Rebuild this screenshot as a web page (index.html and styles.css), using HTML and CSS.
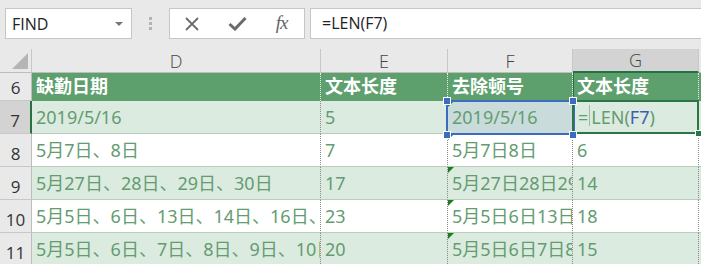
FILE: index.html
```html
<!DOCTYPE html>
<html lang="zh-CN">
<head>
    <meta charset="UTF-8">
    <title>FIND - LEN</title>
    <link rel="stylesheet" href="styles.css">
</head>
<body>
    <div class="toolbar">
        <div class="namebox">
            <span>FIND</span>
            <span class="arrow"></span>
        </div>
        <div class="grip"><i></i><i></i><i></i></div>
        <div class="fbuttons">
            <span class="fbtn">
                <svg width="16" height="16" viewBox="0 0 16 16"><path d="M2 2 L14 14 M14 2 L2 14" stroke="#6b6b6b" stroke-width="1.8" fill="none"/></svg>
            </span>
            <span class="fbtn">
                <svg width="19" height="15" viewBox="0 0 19 15"><path d="M1.5 8 L7 13 L17.5 2" stroke="#6b6b6b" stroke-width="3" fill="none"/></svg>
            </span>
            <span class="fbtn fx">fx</span>
        </div>
        <div class="formula">=LEN(F7)</div>
    </div>

    <div class="sheet">
        <div class="corner"><span class="tri"></span></div>
        <div class="ch">D</div>
        <div class="ch">E</div>
        <div class="ch">F</div>
        <div class="ch ch-sel">G</div>
        <div class="ch ch-end"></div>

        <div class="rh">6</div>
        <div class="cell head">缺勤日期</div>
        <div class="cell head">文本长度</div>
        <div class="cell head">去除顿号</div>
        <div class="cell head head-sel">文本长度</div>
        <div class="cell head end"></div>

        <div class="rh rh-sel">7</div>
        <div class="cell band">2019/5/16</div>
        <div class="cell band">5</div>
        <div class="cell band sel err">2019/5/16</div>
        <div class="cell band edit">=<span class="caret"></span>LEN(<span class="ref">F7</span>)</div>
        <div class="cell band end"></div>

        <div class="rh">8</div>
        <div class="cell">5月7日、8日</div>
        <div class="cell">7</div>
        <div class="cell err">5月7日8日</div>
        <div class="cell">6</div>
        <div class="cell end"></div>

        <div class="rh">9</div>
        <div class="cell band">5月27日、28日、29日、30日</div>
        <div class="cell band">17</div>
        <div class="cell band err">5月27日28日29日30日</div>
        <div class="cell band">14</div>
        <div class="cell band end"></div>

        <div class="rh">10</div>
        <div class="cell">5月5日、6日、13日、14日、16日、17日</div>
        <div class="cell">23</div>
        <div class="cell err">5月5日6日13日14日16日17日</div>
        <div class="cell">18</div>
        <div class="cell end"></div>

        <div class="rh">11</div>
        <div class="cell band">5月5日、6日、7日、8日、9日、10日</div>
        <div class="cell band">20</div>
        <div class="cell band err">5月5日6日7日8日9日10日</div>
        <div class="cell band">15</div>
        <div class="cell band end"></div>

        <!-- selection overlays -->
        <div class="range-box"></div>
        <div class="active-box"></div>
        <span class="handle h-tl"></span>
        <span class="handle h-tr"></span>
        <span class="handle h-bl"></span>
        <span class="handle h-br"></span>
        <span class="fill-handle"></span>
    </div>
</body>
</html>
```

FILE: styles.css
```css
body {
    margin: 0;
    width: 701px;
    height: 264px;
    overflow: hidden;
    background-color: #e9e9e9;
    font-family: "Open Sans", "Noto Sans", sans-serif;
}

/* formula bar */
.toolbar {
    display: flex;
    align-items: flex-start;
    height: 49px;
    padding: 8px 0 0 5px;
    box-sizing: border-box;
}

.namebox {
    width: 127px;
    height: 31px;
    box-sizing: border-box;
    border: 1px solid #c6c6c6;
    background-color: #fff;
    display: flex;
    align-items: center;
    justify-content: space-between;
    padding: 0 8px 0 6px;
    font-size: 16px;
    color: #222;
}

.arrow {
    width: 0;
    height: 0;
    border-left: 4px solid transparent;
    border-right: 4px solid transparent;
    border-top: 4px solid #777;
}

.grip {
    width: 37px;
    height: 31px;
    display: flex;
    flex-direction: column;
    align-items: center;
    justify-content: center;
    gap: 2px;
}

.grip i {
    display: block;
    width: 3px;
    height: 3px;
    background-color: #b3b3b3;
}

.fbuttons {
    width: 136px;
    height: 31px;
    box-sizing: border-box;
    border: 1px solid #c6c6c6;
    background-color: #fff;
    display: flex;
    align-items: center;
}

.fbtn {
    width: 45px;
    display: flex;
    justify-content: center;
    align-items: center;
}

.fx {
    font-family: "Liberation Serif", serif;
    font-style: italic;
    font-size: 19px;
    color: #666;
    letter-spacing: -1px;
    padding-bottom: 2px;
}

.formula {
    flex: 1;
    height: 31px;
    margin-left: 5px;
    box-sizing: border-box;
    border: 1px solid #c6c6c6;
    border-right: none;
    background-color: #fff;
    padding-left: 11px;
    font-size: 16px;
    line-height: 29px;
    color: #222;
}

/* sheet grid */
.sheet {
    position: relative;
    display: grid;
    grid-template-columns: 32px 289px 127px 125px 126px 1fr;
    grid-template-rows: 24px 28px 33px 33px 33px 33px 33px;
}

.corner {
    position: relative;
    border-right: 1px solid #c8c8c8;
    border-bottom: 1px solid #bdbdbd;
}

.tri {
    position: absolute;
    right: 3px;
    bottom: 3px;
    width: 0;
    height: 0;
    border-left: 16px solid transparent;
    border-bottom: 16px solid #b5b5b5;
}

.ch {
    border-right: 1px solid #c8c8c8;
    border-bottom: 1px solid #bdbdbd;
    display: flex;
    justify-content: center;
    align-items: center;
    font-size: 18px;
    font-weight: 300;
    color: #444;
}

.ch-sel {
    background-color: #d3d3d3;
    border-bottom: 2px solid #217346;
}

.ch-end {
    border-right: none;
}

.rh {
    border-right: 1px solid #bdbdbd;
    border-bottom: 1px solid #c8c8c8;
    display: flex;
    justify-content: center;
    align-items: flex-end;
    padding-bottom: 1px;
    font-size: 17px;
    line-height: 22px;
    color: #333;
}

.rh-sel {
    background-color: #d3d3d3;
    border-right: 2px solid #2c6f45;
}

.cell {
    background-color: #fff;
    border-right: 1px dotted #8a8a8a;
    border-bottom: 1px solid #b5cfbb;
    padding: 0 0 4px 4px;
    display: flex;
    align-items: flex-end;
    overflow: hidden;
    white-space: nowrap;
    font-family: "Noto Sans", "Noto Sans CJK SC", sans-serif;
    font-size: 18px;
    line-height: 24px;
    color: #649c71;
    position: relative;
}

.band {
    background-color: #dcebe0;
}

.head {
    background-color: #5e9f6e;
    border-right: 1px dotted #e6f0e8;
    border-bottom: none;
    color: #fff;
    font-weight: bold;
    padding-bottom: 3px;
}

.head-sel {
    border-left: 1px solid #2c6f45;
    padding-left: 3px;
}

.end {
    border-right: none;
}

.sel {
    background-color: #c9dcdb;
}

.err::before {
    content: "";
    position: absolute;
    left: 0;
    top: 0;
    width: 0;
    height: 0;
    border-top: 6px solid #1f7a20;
    border-right: 6px solid transparent;
}

.edit {
    padding-left: 5px;
}

.caret {
    display: inline-block;
    width: 1px;
    height: 21px;
    margin: 0 1px 0 1px;
    background-color: #9fb9a6;
    align-self: center;
}

.ref {
    color: #3d5eae;
}

/* selection overlays */
.range-box {
    position: absolute;
    left: 446px;
    top: 51px;
    width: 129px;
    height: 35px;
    box-sizing: border-box;
    border: 2px solid #3b6cbf;
}

.active-box {
    position: absolute;
    left: 572px;
    top: 51px;
    width: 127px;
    height: 34px;
    box-sizing: border-box;
    border: 2px solid #2b7547;
}

.handle {
    position: absolute;
    width: 6px;
    height: 6px;
    background-color: #3b6cbf;
    border: 1px solid #fff;
}

.h-tl { left: 443px; top: 48px; }
.h-tr { left: 569px; top: 48px; }
.h-bl { left: 443px; top: 82px; }
.h-br { left: 569px; top: 82px; }

.fill-handle {
    position: absolute;
    left: 695px;
    top: 81px;
    width: 5px;
    height: 5px;
    background-color: #2b7547;
    border: 1px solid #fff;
}
```
